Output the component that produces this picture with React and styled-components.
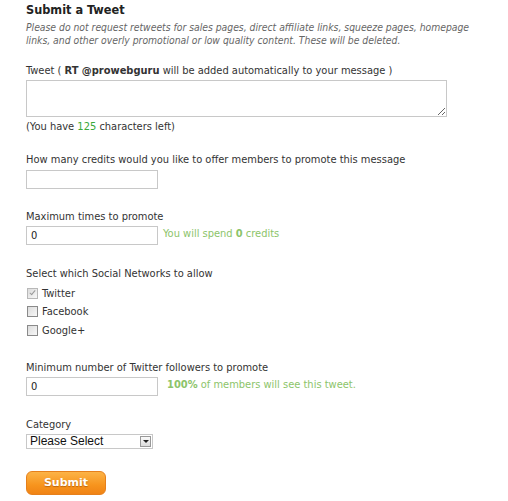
import React from "react";
import styled, { createGlobalStyle } from "styled-components";

const Global = createGlobalStyle`
  body {
    margin: 0;
    background: #fff;
    font-family: "DejaVu Sans Condensed", "DejaVu Sans", Verdana, sans-serif;
    font-size: 11px;
    color: #333;
  }
`;

const Page = styled.form`
  padding: 2px 0 0 26px;
  display: flex;
  flex-direction: column;
  align-items: flex-start;
`;

const Title = styled.h2`
  margin: 0;
  font-size: 12.6px;
  line-height: 16px;
  font-weight: bold;
  color: #222;
`;

const Notice = styled.p`
  margin: 3px 0 0;
  font-style: italic;
  font-size: 10.3px;
  color: #666;
  line-height: 13px;
  white-space: nowrap;
`;

const Field = styled.div`
  display: flex;
  flex-direction: column;
  align-items: flex-start;
  margin-top: ${(p) => p.$top || 20}px;
`;

const Label = styled.label`
  line-height: 14px;
  margin-bottom: ${(p) => p.$gap || 2}px;
`;

const TextArea = styled.textarea`
  width: 421px;
  height: 37px;
  box-sizing: border-box;
  border: 1px solid #c8c8c8;
  padding: 2px;
  font: inherit;
`;

const Hint = styled.div`
  margin-top: 3px;
  line-height: 14px;
`;

const Green = styled.span`
  color: ${(p) => (p.$dark ? "#3aa83a" : "#8cc46a")};
  font-weight: ${(p) => (p.$bold ? "bold" : "normal")};
`;

const InputRow = styled.div`
  display: flex;
  align-items: center;
  gap: ${(p) => p.$gap || 5}px;
  > span {
    margin-top: -4px;
  }
`;

const TextInput = styled.input`
  width: 132px;
  height: 19px;
  box-sizing: border-box;
  border: 1px solid #c8c8c8;
  padding: 1px 4px;
  font: inherit;
  color: #222;
`;

const CheckRow = styled.label`
  display: flex;
  align-items: center;
  height: 18.5px;
  gap: 4px;
`;

const Check = styled.input.attrs({ type: "checkbox" })`
  appearance: none;
  margin: 0 0 0 1px;
  width: 11px;
  height: 11px;
  box-sizing: border-box;
  border: 1px solid ${(p) => (p.disabled ? "#b8b8b8" : "#8a8a8a")};
  background: linear-gradient(135deg, #dcdcdc, #f8f8f8);
  display: flex;
  align-items: center;
  justify-content: center;
  &:checked::after {
    content: "";
    width: 2px;
    height: 5px;
    margin-top: -2px;
    border: solid #9a9a9a;
    border-width: 0 1.5px 1.5px 0;
    transform: rotate(40deg);
  }
`;

const SelectWrap = styled.div`
  position: relative;
  width: 127px;
  height: 15px;
`;

const Select = styled.select`
  appearance: none;
  width: 100%;
  height: 15px;
  box-sizing: border-box;
  border: 1px solid #c8c8c8;
  padding: 0 0 0 3px;
  font-family: "Liberation Sans", Arial, sans-serif;
  font-size: 12px;
  line-height: 13px;
  color: #111;
  background: #fff;
  border-radius: 0;
`;

const Arrow = styled.span`
  position: absolute;
  right: 2px;
  top: 2px;
  width: 11px;
  height: 11px;
  box-sizing: border-box;
  border: 1px solid #999;
  background: linear-gradient(#fafafa, #dcdcdc);
  display: flex;
  align-items: center;
  justify-content: center;
  pointer-events: none;
  &::after {
    content: "";
    border-left: 3px solid transparent;
    border-right: 3px solid transparent;
    border-top: 3px solid #222;
  }
`;

const SubmitButton = styled.button`
  margin-top: 22px;
  width: 80px;
  height: 24px;
  border: 1px solid #e6801c;
  border-radius: 6px;
  background: linear-gradient(#fcb347, #f7941d 60%, #f08315);
  color: #fff;
  font-family: "DejaVu Sans", Verdana, sans-serif;
  font-size: 11px;
  font-weight: bold;
  text-shadow: 0 1px 1px rgba(150, 70, 0, 0.6);
  cursor: pointer;
`;

export default function App() {
  return (
    <>
      <Global />
      <Page onSubmit={(e) => e.preventDefault()}>
        <Title>Submit a Tweet</Title>
        <Notice>
          Please do not request retweets for sales pages, direct affiliate links, squeeze pages, homepage
          <br />
          links, and other overly promotional or low quality content. These will be deleted.
        </Notice>

        <Field $top={17}>
          <Label>
            Tweet ( <b>RT @prowebguru</b> will be added automatically to your message )
          </Label>
          <TextArea />
          <Hint>
            (You have <Green $dark>125</Green> characters left)
          </Hint>
        </Field>

        <Field $top={19}>
          <Label $gap={3}>How many credits would you like to offer members to promote this message</Label>
          <TextInput />
        </Field>

        <Field $top={21}>
          <Label>Maximum times to promote</Label>
          <InputRow>
            <TextInput defaultValue="0" />
            <Green>
              You will spend <Green $bold>0</Green> credits
            </Green>
          </InputRow>
        </Field>

        <Field $top={22}>
          <Label $gap={3}>Select which Social Networks to allow</Label>
          <CheckRow>
            <Check defaultChecked disabled /> Twitter
          </CheckRow>
          <CheckRow>
            <Check /> Facebook
          </CheckRow>
          <CheckRow>
            <Check /> Google+
          </CheckRow>
        </Field>

        <Field $top={21}>
          <Label>Minimum number of Twitter followers to promote</Label>
          <InputRow $gap={9}>
            <TextInput defaultValue="0" />
            <Green>
              <Green $bold>100%</Green> of members will see this tweet.
            </Green>
          </InputRow>
        </Field>

        <Field $top={22}>
          <Label>Category</Label>
          <SelectWrap>
            <Select defaultValue="">
              <option value="">Please Select</option>
            </Select>
            <Arrow />
          </SelectWrap>
        </Field>

        <SubmitButton type="submit">Submit</SubmitButton>
      </Page>
    </>
  );
}
